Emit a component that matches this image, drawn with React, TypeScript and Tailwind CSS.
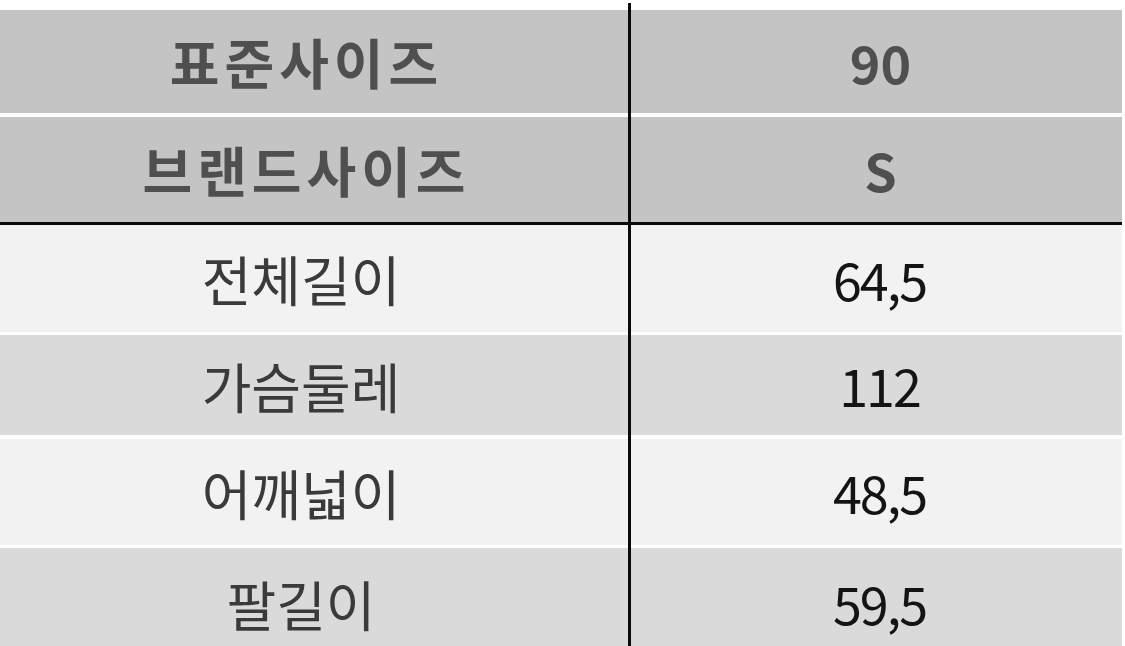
const font = {
  fontFamily: '"Noto Sans CJK KR", "Noto Sans", sans-serif',
};

type Row = {
  label: string;
  value: string;
  height: string;
  bg: string;
  sep: string;
};

const headRows: Row[] = [
  { label: '표준사이즈', value: '90', height: 'h-[103px]', bg: 'bg-[#c4c4c4]', sep: 'h-[4px] bg-white' },
  { label: '브랜드사이즈', value: 'S', height: 'h-[105px]', bg: 'bg-[#c4c4c4]', sep: 'h-[3px] bg-[#0a0a0a]' },
];

const bodyRows: Row[] = [
  { label: '전체길이', value: '64,5', height: 'h-[107px]', bg: 'bg-[#f2f2f2]', sep: 'h-[3px] bg-white' },
  { label: '가슴둘레', value: '112', height: 'h-[100px]', bg: 'bg-[#dadada]', sep: 'h-[4px] bg-white' },
  { label: '어깨넓이', value: '48,5', height: 'h-[106px]', bg: 'bg-[#f2f2f2]', sep: 'h-[3px] bg-white' },
  { label: '팔길이', value: '59,5', height: 'h-[110px]', bg: 'bg-[#dadada]', sep: 'h-0' },
];

function Column({ side }: { side: 'left' | 'right' }) {
  const isLeft = side === 'left';
  return (
    <div className={isLeft ? 'flex w-[628px] flex-col' : 'flex flex-1 flex-col'}>
      <div className="h-[7px] bg-white" />
      {headRows.map((r) => (
        <div key={r.label}>
          <div
            className={`flex ${r.height} ${r.bg} items-center justify-center ${
              isLeft ? 'pr-[20px] pl-[5px] text-[54px] tracking-[5px]' : 'pl-[8px] text-[52px]'
            } font-bold text-[#4f4f4f]`}
          >
            {isLeft ? r.label : r.value}
          </div>
          <div className={r.sep} />
        </div>
      ))}
      {bodyRows.map((r) => (
        <div key={r.label}>
          <div
            className={`flex ${r.height} ${r.bg} items-center justify-center ${
              isLeft
                ? 'pr-[26px] text-[54px] text-[#3a3a3a]'
                : 'pl-[6px] text-[52px] tracking-[-2px] text-[#141414]'
            }`}
          >
            {isLeft ? r.label : r.value}
          </div>
          <div className={r.sep} />
        </div>
      ))}
    </div>
  );
}

export default function App() {
  return (
    <div className="h-[646px] w-[1125px] overflow-hidden bg-white" style={font}>
      <div className="flex pr-[3px] pt-[3px]">
        <Column side="left" />
        <div className="w-[3px] shrink-0 self-stretch bg-[#0a0a0a]" />
        <Column side="right" />
      </div>
    </div>
  );
}
